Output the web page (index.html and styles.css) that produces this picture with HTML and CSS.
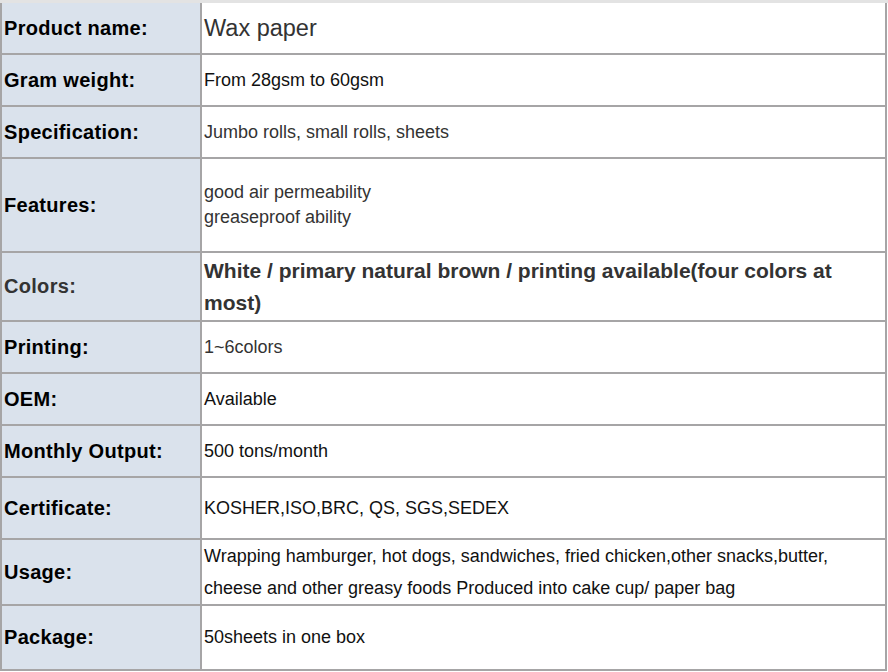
FILE: index.html
```html
<!DOCTYPE html>
<html>
<head>
<meta charset="utf-8">
<link rel="stylesheet" href="styles.css">
</head>
<body>
<div class="topband"></div>
<table class="spec">
  <tr class="r50">
    <td class="label">Product name:</td>
    <td class="val big">Wax paper</td>
  </tr>
  <tr class="r50">
    <td class="label">Gram weight:</td>
    <td class="val dark">From 28gsm to 60gsm</td>
  </tr>
  <tr class="r50">
    <td class="label">Specification:</td>
    <td class="val">Jumbo rolls, small rolls, sheets</td>
  </tr>
  <tr class="r92">
    <td class="label">Features:</td>
    <td class="val lines"><span class="grey">good air permeability</span><br><span class="dark">greaseproof ability</span></td>
  </tr>
  <tr class="r67">
    <td class="label soft">Colors:</td>
    <td class="val boldval">White / primary natural brown / printing available(four colors at most)</td>
  </tr>
  <tr class="r50">
    <td class="label">Printing:</td>
    <td class="val">1~6colors</td>
  </tr>
  <tr class="r50">
    <td class="label">OEM:</td>
    <td class="val dark">Available</td>
  </tr>
  <tr class="r50">
    <td class="label">Monthly Output:</td>
    <td class="val dark">500 tons/month</td>
  </tr>
  <tr class="r60">
    <td class="label">Certificate:</td>
    <td class="val dark">KOSHER,ISO,BRC, QS, SGS,SEDEX</td>
  </tr>
  <tr class="r64">
    <td class="label">Usage:</td>
    <td class="val dark tall">Wrapping hamburger, hot dogs, sandwiches, fried chicken,other snacks,butter,<br>cheese and other greasy foods Produced into cake cup/ paper bag</td>
  </tr>
  <tr class="r63">
    <td class="label">Package:</td>
    <td class="val dark">50sheets in one box</td>
  </tr>
</table>
</body>
</html>
```

FILE: styles.css
```css
html, body {
  margin: 0;
  padding: 0;
  background: #ffffff;
}
body {
  font-family: "Liberation Sans", Arial, sans-serif;
  color: #222;
}
.topband {
  height: 3px;
  background: #e3e3e3;
}
.spec {
  border-collapse: separate;
  border-spacing: 0;
  border-left: 2px solid #a6a5a6;
  width: 887px;
  table-layout: fixed;
}
.spec td {
  border-right: 2px solid #a6a5a6;
  border-bottom: 2px solid #a6a5a6;
  padding: 0 0 0 2px;
  vertical-align: middle;
  box-sizing: border-box;
}
.label {
  width: 200px;
  background: #dae2ec;
  font-weight: bold;
  font-size: 20px;
  letter-spacing: 0.3px;
  color: #000;
}
.label.soft {
  color: #333;
}
.val {
  font-size: 18px;
  color: #333;
}
.val.dark { color: #111; }
.grey { color: #333; }
.val.big {
  font-size: 23.5px;
  color: #333;
}
.val.lines { line-height: 25px; }
.val.tall { line-height: 32px; }
.val.boldval {
  font-weight: bold;
  font-size: 21px;
  line-height: 32px;
  color: #333;
}
.r50 td { height: 52px; }
.r92 td { height: 94px; }
.r67 td { height: 69px; }
.r60 td { height: 62px; }
.r64 td { height: 66px; }
.r63 td { height: 65px; }
```
